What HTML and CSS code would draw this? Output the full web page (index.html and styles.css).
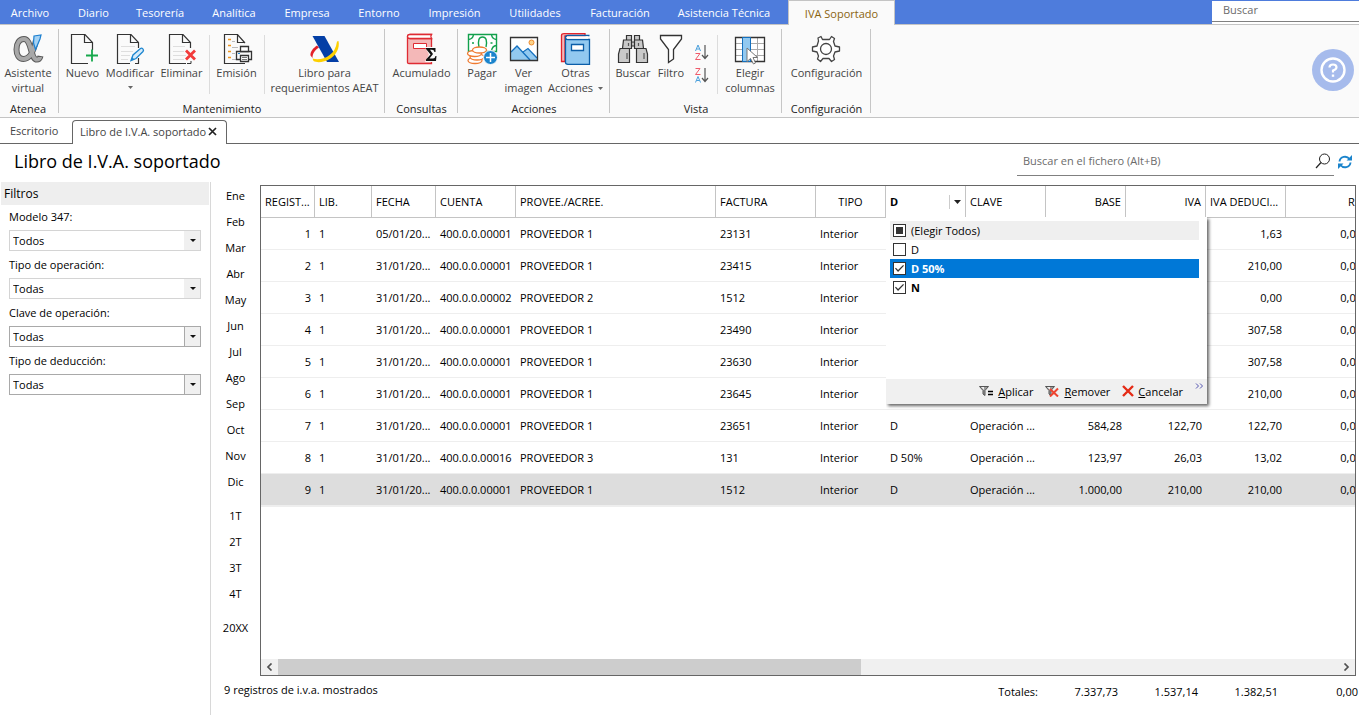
FILE: index.html
```html
<!DOCTYPE html>
<html lang="es">
<head>
<meta charset="utf-8">
<title>Libro de I.V.A. soportado</title>
<link rel="stylesheet" href="styles.css">
</head>
<body>
<div class="app">
  <header class="menubar">
    <nav class="menu">
      <button class="menu-tab">Archivo</button>
      <button class="menu-tab">Diario</button>
      <button class="menu-tab">Tesorería</button>
      <button class="menu-tab">Analítica</button>
      <button class="menu-tab">Empresa</button>
      <button class="menu-tab">Entorno</button>
      <button class="menu-tab">Impresión</button>
      <button class="menu-tab">Utilidades</button>
      <button class="menu-tab">Facturación</button>
      <button class="menu-tab">Asistencia Técnica</button>
      <button class="menu-tab active">IVA Soportado</button>
    </nav>
    <div class="top-search"><input type="text" placeholder="Buscar" aria-label="Buscar"></div>
  </header>

  <section class="ribbon">
    <div class="group g-atenea">
      <div class="tools">
        <button class="tool">
          <svg width="32" height="32" viewBox="0 0 32 32" fill="none"><path d="M24 7C22 17 18 26 11.500 26C7 26 4.500 22 4.500 16.500C4.500 10 7.500 6 12 6C19.500 6 18.500 25 24 26.500C26.500 27 28 25.500 28.500 23" stroke="#5a5a5a" stroke-width="6"/><path d="M24 7C22 17 18 26 11.500 26C7 26 4.500 22 4.500 16.500C4.500 10 7.500 6 12 6C19.500 6 18.500 25 24 26.500C26.500 27 28 25.500 28 24" stroke="#a8a8a8" stroke-width="4"/><path d="M22 3L29 2L28 6L23.500 16.500L21.500 10Z" fill="#a4d2f4" stroke="#1c7fd0" stroke-width="1.200"/></svg>
          <span>Asistente<br>virtual</span>
        </button>
      </div>
      <h2>Atenea</h2>
    </div>

    <div class="group g-mant">
      <div class="tools">
        <button class="tool w-nuevo">
          <svg width="32" height="32" viewBox="0 0 32 32" fill="none"><path d="M25.500 17V9.500L18 1.500H4.500V30.500H21" stroke="#333" stroke-width="1.200"/><path d="M17.500 1.500V9.500H25.500" stroke="#333" stroke-width="1.200"/><path d="M19 22.500H31M25 16.500V28.500" stroke="#16a84c" stroke-width="1.800"/></svg>
          <span>Nuevo</span>
        </button>
        <button class="tool w-modif">
          <svg width="32" height="32" viewBox="0 0 32 32" fill="none"><path d="M24.500 15V9.500L17 1.500H3.500V30.500H16M24.500 25V30.500H21" stroke="#333" stroke-width="1.200"/><path d="M16.500 1.500V9.500H24.500" stroke="#333" stroke-width="1.200"/><path d="M7 13.500H21M7 18.500H19M7 22.500H16M7 26.500H14" stroke="#dedede"/><path d="M17 27.500L19 22L26.500 15.500C28 14.500 30.500 16.500 29 18.500L22 25.500Z" fill="#d7ebfa" stroke="#1d86cf" stroke-width="1.300"/><path d="M17 27.500L18 24L20.500 26.500Z" fill="#1d86cf"/></svg>
          <span>Modificar</span>
          <svg class="caret" width="5" height="3" viewBox="0 0 5 3"><path d="M0 0H5L2.500 3Z" fill="#666"/></svg>
        </button>
        <button class="tool w-elim">
          <svg width="32" height="32" viewBox="0 0 32 32" fill="none"><path d="M24.500 15V9.500L17 1.500H3.500V30.500H20" stroke="#333" stroke-width="1.200"/><path d="M16.500 1.500V9.500H24.500" stroke="#333" stroke-width="1.200"/><path d="M25 28V30.500H21" stroke="#333"/><path d="M7 13.500H19M7 18.500H18M7 22.500H20M7 26.500H18" stroke="#dedede"/><path d="M20 17.500L29 26.500M29 17.500L20 26.500" stroke="#f23b3b" stroke-width="2.800"/></svg>
          <span>Eliminar</span>
        </button>
        <i class="sep"></i>
        <button class="tool w-elim">
          <svg width="32" height="32" viewBox="0 0 32 32" fill="none"><path d="M24 10L16.500 1.500H3.500V30.500H24" stroke="#333" stroke-width="1.200"/><path d="M16.500 1.500V9.500H24" stroke="#333" stroke-width="1.200"/><path d="M7 6.500H10M7 12.500H10M7 18.500H10M7 24.500H10" stroke="#f0961e" stroke-width="1.400"/><path d="M11 8.500H14M11 14.500H17M11 20.500H14M11 26.500H16" stroke="#bbb"/><path d="M15.500 18.500H30.500V26.500H15.500Z" fill="#fafafa" stroke="#333" stroke-width="1.300"/><path d="M19.500 13.500H27.500V18.500H19.500Z" fill="#fff" stroke="#333" stroke-width="1.300"/><path d="M19.500 22.500H27.500V28.500H19.500Z" fill="#fff" stroke="#333" stroke-width="1.300"/><path d="M21 24.500H26M21 26.500H26" stroke="#777"/><path d="M17 20.500H19" stroke="#1d86cf"/></svg>
          <span>Emisión</span>
        </button>
        <i class="sep"></i>
        <button class="tool w-libro">
          <svg width="32" height="32" viewBox="0 0 32 32" fill="none"><path d="M8 12.500C4 15 1 19 1.500 22.500L3.500 25C3.500 20.500 6 17 10 14.500Z" fill="#e32028"/><path d="M3.500 3H15.500L30 29H18Z" fill="#043fa6"/><path d="M3.500 25.500C12 28 26 24 28 8.500L29.500 8C31 15 27 22 21.500 25.500C15 29.500 8 30 4.500 28Z" fill="#fdd000"/></svg>
          <span>Libro para<br>requerimientos AEAT</span>
        </button>
      </div>
      <h2>Mantenimiento</h2>
    </div>

    <div class="group g-cons">
      <div class="tools">
        <button class="tool">
          <svg width="32" height="32" viewBox="0 0 32 32" fill="none"><path d="M2.500 4V29.500Q2.500 30.500 4 30.500H26.500V5.500H5Q2.500 5.500 2.500 3.500Q2.500 1.500 5 1.500H27" fill="#f4b8b8" stroke="#df2b33" stroke-width="1.300"/><path d="M5 1.500H26.500Q25 3.500 26.500 5.500H5Q2.500 5.500 2.500 3.500Q2.500 1.500 5 1.500Z" fill="#fff" stroke="#df2b33" stroke-width="1.300"/><path d="M8.500 10.500H21.500V15.500H8.500Z" fill="#fff" stroke="#df2b33"/><path d="M20 14H32V29H20L24 21.500Z" fill="#fafafa"/><path d="M21 15H30.500V19H29.500Q29 16.800 27 16.800H25L28 21L24.500 25.500H28Q30 25.500 30.500 23H31.500L31 28H21V26.500L25.500 21.500L21 16Z" fill="#111"/></svg>
          <span>Acumulado</span>
        </button>
      </div>
      <h2>Consultas</h2>
    </div>

    <div class="group g-acc">
      <div class="tools">
        <button class="tool w-pagar">
          <svg width="32" height="32" viewBox="0 0 32 32" fill="none"><path d="M2.500 1.500H30.500V18.500H2.500Z" fill="#fff" stroke="#12a04c" stroke-width="1.400"/><path d="M2.500 6.500Q7 6 7.500 1.500M25.500 1.500Q26 6 30.500 6.500M25.500 18Q26 13 30.500 12.500M6 10H8M24.500 10H26.500M13 14Q11 4 16.500 4Q22 4 20 14" stroke="#12a04c" stroke-width="1.400"/><g fill="#fff" stroke="#ef7b32" stroke-width="1.300"><ellipse cx="9" cy="27.500" rx="7" ry="3"/><ellipse cx="11" cy="24" rx="7" ry="3"/><ellipse cx="8.500" cy="20.500" rx="7" ry="3"/><ellipse cx="13.500" cy="17" rx="7" ry="3"/></g><circle cx="24.500" cy="24.500" r="7" fill="#1b84cc" stroke="#fafafa"/><path d="M20 24.500H29M24.500 20V29" stroke="#fff" stroke-width="1.500"/></svg>
          <span>Pagar</span>
        </button>
        <button class="tool w-ver">
          <svg width="32" height="32" viewBox="0 0 32 32" fill="none"><path d="M2.500 4.500H29.500V27.500H2.500Z" fill="#fff"/><path d="M3 19L9 13L22 27H3ZM14 20L20 16L29 25V27H21Z" fill="#92c9f0"/><path d="M3 19L9 13L22 27M15 19L20 15.500L29 25" stroke="#1470bf" stroke-width="1.300"/><circle cx="23.500" cy="9.500" r="2.500" fill="#fbd38a" stroke="#ef8a2c"/><path d="M2.500 4.500H29.500V27.500H2.500Z" stroke="#333" stroke-width="1.300"/></svg>
          <span>Ver<br>imagen</span>
        </button>
        <button class="tool w-otras">
          <svg width="32" height="32" viewBox="0 0 32 32" fill="none"><path d="M1.500 2V28.500H5V3H25V.700H4Q1.500 .700 1.500 2.500" fill="#f4b8b8" stroke="#e3232b" stroke-width="1.300"/><path d="M5.500 3V29.500Q5.500 31.300 8 31.300H29.500V6.500H8Q5.500 6.500 5.500 4.500Q5.500 2.500 8 2.500H29.500" fill="#92c9f0" stroke="#0b5ea8" stroke-width="1.300"/><path d="M7 3.300H28V5.700H7Z" fill="#fff"/><path d="M11.500 11.500H23.500V17.500H11.500Z" fill="#fff" stroke="#0b5ea8" stroke-width="1.300"/></svg>
          <span>Otras<br>Acciones <svg class="inline-caret" width="5" height="3" viewBox="0 0 5 3"><path d="M0 0H5L2.500 3Z" fill="#666"/></svg></span>
        </button>
      </div>
      <h2>Acciones</h2>
    </div>

    <div class="group g-vista">
      <div class="tools">
        <button class="tool w-nuevo">
          <svg width="32" height="32" viewBox="0 0 32 32" fill="#c9c9c9" stroke="#333" stroke-width="1.200"><path d="M9.500 2.500H14.500V7.500H9.500ZM17.500 2.500H22.500V7.500H17.500ZM14 9H18V13H14Z"/><path d="M6.500 7H14.500V15.500H5.500ZM17.500 7H25.500L26.500 15.500H17.500ZM3 15.500H12.500V29.500H1.500V21ZM19.500 15.500H29L30.500 21V29.500H19.500Z"/><path d="M10 20V26M11.500 10V13M21.500 10V13M27 20V26" stroke="#555"/></svg>
          <span>Buscar</span>
        </button>
        <button class="tool w-filtro">
          <svg width="32" height="32" viewBox="0 0 32 32" fill="#fff" stroke="#333" stroke-width="1.300"><path d="M5.500 2.500H26.500V6L18.500 16.500V26L13.500 29.500V16.500L5.500 6Z"/></svg>
          <span>Filtro</span>
        </button>
        <div class="sorts">
          <button class="sort" aria-label="Orden ascendente"><svg width="16" height="17" viewBox="0 0 16 17" fill="none"><path d="M1.500 7L4 1L6.500 7M2.500 5H5.500" stroke="#4aa0dc"/><path d="M1.500 9.500H6L1.500 15.500H6.500" stroke="#ef5a6a"/><path d="M11 1V14M8 11L11 14.500L14 11" stroke="#555" stroke-width="1.200"/></svg></button>
          <button class="sort" aria-label="Orden descendente"><svg width="16" height="17" viewBox="0 0 16 17" fill="none"><path d="M1.500 1.500H6L1.500 7.500H6.500" stroke="#ef5a6a"/><path d="M1.500 15.500L4 9.500L6.500 15.500M2.500 13.500H5.500" stroke="#4aa0dc"/><path d="M11 1V14M8 11L11 14.500L14 11" stroke="#555" stroke-width="1.200"/></svg></button>
        </div>
        <i class="sep"></i>
        <button class="tool w-elegir">
          <svg width="32" height="32" viewBox="0 0 32 32" fill="none"><path d="M1.500 4.500H30.500V28.500H1.500Z" fill="#fff"/><path d="M1.500 10.500H30.500M1.500 16.500H30.500M1.500 22.500H30.500M23.500 4.500V28.500" stroke="#aaa"/><path d="M1.500 4.500H30.500V28.500H1.500Z" stroke="#333" stroke-width="1.300"/><path d="M8.500 4.500H16.500V28.500H8.500Z" fill="#92c9f0" stroke="#1470bf"/><path d="M13 15V28.500L16.500 25.500L19.500 31L21.500 30L19 24.500H23.500Z" fill="#fff" stroke="#777"/></svg>
          <span>Elegir<br>columnas</span>
        </button>
      </div>
      <h2>Vista</h2>
    </div>

    <div class="group g-conf">
      <div class="tools">
        <button class="tool">
          <svg width="32" height="32" viewBox="0 0 32 32" fill="#fff" stroke="#444" stroke-width="1.300" stroke-linejoin="round"><path d="M12.500 6.500L11 3.500L8 5L8.500 8L7 13L2.500 14V18L7 19L8.500 23L7.500 26L10.500 28.500L13 25.500H19L21.500 28.500L24.500 26.500L23.500 23L25 19L29.500 18V14L25 13L23.500 8.500L24.500 5.500L21.500 3.500L19.500 6.500Z"/><circle cx="16" cy="16" r="5.500"/></svg>
          <span>Configuración</span>
        </button>
      </div>
      <h2>Configuración</h2>
    </div>

    <button class="help" aria-label="Ayuda"><svg width="26" height="26" viewBox="0 0 26 26" fill="none" stroke="#fff"><circle cx="13" cy="13" r="11.500" stroke-width="2.400"/><path d="M9.500 10.500Q9.500 7.500 13 7.500Q16.500 7.500 16.500 10.300Q16.500 12.300 13 13.500V15.500" stroke-width="2.200"/><path d="M13 17.500V19.800" stroke-width="2.400"/></svg></button>
  </section>

  <nav class="doc-tabs">
    <button class="doc-tab">Escritorio</button>
    <button class="doc-tab current">Libro de I.V.A. soportado <svg width="9" height="9" viewBox="0 0 9 9"><path d="M1 1L8 8M8 1L1 8" stroke="#222" stroke-width="1.700"/></svg></button>
    <i class="rest"></i>
  </nav>

  <div class="title-bar">
    <h1>Libro de I.V.A. soportado</h1>
    <label class="file-search">
      <input type="text" placeholder="Buscar en el fichero (Alt+B)" aria-label="Buscar en el fichero">
      <svg width="16" height="16" viewBox="0 0 16 16" fill="none" stroke="#222"><circle cx="9.500" cy="6" r="5"/><path d="M6 9.500L1 15" stroke-width="1.200"/></svg>
    </label>
    <button class="refresh" aria-label="Actualizar"><svg width="14" height="14" viewBox="0 0 14 14" fill="none" stroke="#1b84cc" stroke-width="1.900"><path d="M1.500 6.500C2 1.500 8.500 0 11.500 4M12.500 7.500C12 12.500 5.500 14 2.500 10"/><path d="M14 0V5.500H8.500ZM0 14V8.500H5.500Z" fill="#1b84cc" stroke="none"/></svg></button>
  </div>

  <main class="work">
    <aside class="filters">
      <h3>Filtros</h3>
      <label for="f1">Modelo 347:</label>
      <div class="combo light"><select id="f1"><option>Todos</option></select><i></i></div>
      <label for="f2">Tipo de operación:</label>
      <div class="combo light"><select id="f2"><option>Todas</option></select><i></i></div>
      <label for="f3">Clave de operación:</label>
      <div class="combo"><select id="f3"><option>Todas</option></select><i></i></div>
      <label for="f4">Tipo de deducción:</label>
      <div class="combo"><select id="f4"><option>Todas</option></select><i></i></div>
    </aside>

    <nav class="periods">
      <button>Ene</button><button>Feb</button><button>Mar</button><button>Abr</button><button>May</button><button>Jun</button><button>Jul</button><button>Ago</button><button>Sep</button><button>Oct</button><button>Nov</button><button>Dic</button>
      <button class="first">1T</button><button>2T</button><button>3T</button><button>4T</button>
      <button class="first">20XX</button>
    </nav>

    <section class="book">
      <div class="grid">
        <div class="viewport">
          <table>
            <colgroup><col class="c54"><col class="c57"><col class="c64"><col class="c80"><col class="c200"><col class="c100"><col class="c70"><col class="c80"><col class="c80"><col class="c80"><col class="c80"><col class="c80"><col class="c80"></colgroup>
            <thead>
              <tr><th>REGIST...</th><th>LIB.</th><th>FECHA</th><th>CUENTA</th><th>PROVEE./ACREE.</th><th>FACTURA</th><th class="mid">TIPO</th><th class="filtered"><div><b>D</b><button aria-label="Filtrar D"><svg width="7" height="4" viewBox="0 0 7 4"><path d="M0 0H7L3.500 4Z" fill="#222"/></svg></button></div></th><th>CLAVE</th><th class="num">BASE</th><th class="num">IVA</th><th>IVA DEDUCI...</th><th class="num">RE</th></tr>
            </thead>
            <tbody>
              <tr><td class="num">1</td><td>1</td><td>05/01/20...</td><td>400.0.0.00001</td><td>PROVEEDOR 1</td><td>23131</td><td>Interior</td><td></td><td></td><td></td><td></td><td class="num">1,63</td><td class="num">0,00</td></tr>
              <tr><td class="num">2</td><td>1</td><td>31/01/20...</td><td>400.0.0.00001</td><td>PROVEEDOR 1</td><td>23415</td><td>Interior</td><td></td><td></td><td></td><td></td><td class="num">210,00</td><td class="num">0,00</td></tr>
              <tr><td class="num">3</td><td>1</td><td>31/01/20...</td><td>400.0.0.00002</td><td>PROVEEDOR 2</td><td>1512</td><td>Interior</td><td></td><td></td><td></td><td></td><td class="num">0,00</td><td class="num">0,00</td></tr>
              <tr><td class="num">4</td><td>1</td><td>31/01/20...</td><td>400.0.0.00001</td><td>PROVEEDOR 1</td><td>23490</td><td>Interior</td><td></td><td></td><td></td><td></td><td class="num">307,58</td><td class="num">0,00</td></tr>
              <tr><td class="num">5</td><td>1</td><td>31/01/20...</td><td>400.0.0.00001</td><td>PROVEEDOR 1</td><td>23630</td><td>Interior</td><td></td><td></td><td></td><td></td><td class="num">307,58</td><td class="num">0,00</td></tr>
              <tr><td class="num">6</td><td>1</td><td>31/01/20...</td><td>400.0.0.00001</td><td>PROVEEDOR 1</td><td>23645</td><td>Interior</td><td></td><td></td><td></td><td></td><td class="num">210,00</td><td class="num">0,00</td></tr>
              <tr><td class="num">7</td><td>1</td><td>31/01/20...</td><td>400.0.0.00001</td><td>PROVEEDOR 1</td><td>23651</td><td>Interior</td><td>D</td><td>Operación ...</td><td class="num">584,28</td><td class="num">122,70</td><td class="num">122,70</td><td class="num">0,00</td></tr>
              <tr><td class="num">8</td><td>1</td><td>31/01/20...</td><td>400.0.0.00016</td><td>PROVEEDOR 3</td><td>131</td><td>Interior</td><td>D 50%</td><td>Operación ...</td><td class="num">123,97</td><td class="num">26,03</td><td class="num">13,02</td><td class="num">0,00</td></tr>
              <tr class="selected"><td class="num">9</td><td>1</td><td>31/01/20...</td><td>400.0.0.00001</td><td>PROVEEDOR 1</td><td>1512</td><td>Interior</td><td>D</td><td>Operación ...</td><td class="num">1.000,00</td><td class="num">210,00</td><td class="num">210,00</td><td class="num">0,00</td></tr>
            </tbody>
          </table>
        </div>
        <div class="hscroll">
          <button aria-label="Desplazar a la izquierda"><svg width="7" height="8" viewBox="0 0 7 8" fill="none" stroke="#505050" stroke-width="1.700"><path d="M5.500 .500L2 4L5.500 7.500"/></svg></button>
          <div class="track"><i class="thumb"></i></div>
          <button aria-label="Desplazar a la derecha"><svg width="7" height="8" viewBox="0 0 7 8" fill="none" stroke="#505050" stroke-width="1.700"><path d="M1.500 .500L5 4L1.500 7.500"/></svg></button>
        </div>

        <div class="popup">
          <div class="options">
            <label class="option all"><input type="checkbox" class="partial">(Elegir Todos)</label>
            <label class="option"><input type="checkbox">D</label>
            <label class="option hot"><input type="checkbox" checked>D 50%</label>
            <label class="option on"><input type="checkbox" checked>N</label>
          </div>
          <div class="actions">
            <button><svg width="15" height="12" viewBox="0 0 15 12"><path d="M.500 1.500H9.500L6 5.500V10.500L4 9V5.500Z" fill="#999" stroke="#555"/><path d="M2 2H5L5 5Z" fill="#eee"/><path d="M9 6.500H14M9 9.500H14" stroke="#000" stroke-width="1.600"/></svg><span><u>A</u>plicar</span></button>
            <button><svg width="15" height="12" viewBox="0 0 15 12"><path d="M.500 1.500H9.500L6 5.500V10.500L4 9V5.500Z" fill="#999" stroke="#555"/><path d="M2 2H5L5 5Z" fill="#eee"/><path d="M5 4L13 11.500M13 3.500L5 11.500" stroke="#ee4430" stroke-width="2"/></svg><span><u>R</u>emover</span></button>
            <button><svg width="12" height="12" viewBox="0 0 12 12"><path d="M1 1L11 11M11 1L1 11" stroke="#e52b16" stroke-width="2.400"/></svg><span><u>C</u>ancelar</span></button>
            <svg class="more" width="9" height="6" viewBox="0 0 9 6" fill="none" stroke="#5555b0"><path d="M1 .500L3.500 3L1 5.500M5 .500L7.500 3L5 5.500"/></svg>
          </div>
        </div>
      </div>

      <footer class="status">
        <span class="count">9 registros de i.v.a. mostrados</span>
        <span class="total-label">Totales:</span>
        <span class="total">7.337,73</span><span class="total">1.537,14</span><span class="total">1.382,51</span><span class="total">0,00</span>
      </footer>
    </section>
  </main>
</div>
</body>
</html>
```

FILE: styles.css
```css
* { box-sizing: border-box; }
body { margin: 0; background: #fff; color: #000; font: 11px/15px "Open Sans", "Noto Sans", sans-serif; }
button, input, select { font: inherit; color: inherit; margin: 0; padding: 0; border: 0; background: none; border-radius: 0; }
h1, h2, h3 { margin: 0; font-weight: 400; }
svg { display: block; flex: none; }
.app { min-height: 100vh; display: flex; flex-direction: column; overflow: hidden; }

/* Menu bar */
.menubar { display: flex; justify-content: space-between; height: 25px; background: #4e7cdc; border-bottom: 1px solid #c4c4c4; }
.menu { display: grid; grid-template-columns: 60px 67px 66px 82px 64px 80px 71px 90px 80px 128px 107px; height: 25px; }
.menu-tab { color: #fff; white-space: nowrap; }
.menu-tab.active { color: #8a6410; background: #fafafa; border: 1px solid #c4c4c4; border-bottom: 0; }
.top-search { width: 147px; margin-top: 1px; background: #fff; }
.top-search input { display: block; width: 100%; height: 21px; padding: 0 11px 3px; border-bottom: 1px solid #808080; }
input::placeholder { color: #6b6b6b; opacity: 1; }
input { outline: 0; }

/* Ribbon */
.ribbon { display: flex; height: 93px; background: #fafafa; border-bottom: 1px solid #c4c4c4; position: relative; }
.group { display: flex; flex-direction: column; justify-content: space-between; position: relative; padding-top: 8px; }
.group::after { content: ""; position: absolute; right: 0; top: 4px; bottom: 4px; width: 1px; background: #c6c6c6; }
.group h2 { font-size: 11px; line-height: 16px; text-align: center; color: #222; }
.tools { display: flex; justify-content: center; }
.tool { display: flex; flex-direction: column; align-items: center; color: #444; white-space: nowrap; }
.tool span { text-align: center; }
.caret { margin-top: 6px; }
.inline-caret { display: inline-block; vertical-align: 2px; margin-left: 2px; }
.sep { width: 1px; height: 59px; margin: 2px 3px 0; background: #dcdcdc; }
.g-atenea { width: 59px; }
.g-atenea .tools, .g-atenea h2 { padding-right: 3px; }
.g-mant { width: 326px; }
.g-cons { width: 73px; }
.g-acc { width: 152px; }
.g-vista { width: 172px; }
.g-conf { width: 89px; }
.w-nuevo { width: 40px; }
.w-modif { width: 55px; }
.w-elim { width: 48px; }
.w-libro { width: 114px; }
.w-pagar { width: 40px; }
.w-ver { width: 43px; }
.w-otras { width: 61px; }
.w-filtro { width: 36px; }
.w-elegir { width: 58px; }
.sorts { width: 25px; display: flex; flex-direction: column; gap: 6px; padding: 11px 0 0 5px; }
.help { display: grid; place-items: center; width: 42px; height: 42px; margin: 24px 5px 0 auto; border-radius: 50%; background: #a6bbec; }

/* Document tabs */
.doc-tabs { display: flex; align-items: flex-end; height: 26px; }
.doc-tab { height: 24px; padding: 0 10px 2px; color: #444; border-bottom: 1px solid #666; white-space: nowrap; width: 72px; text-align: left; }
.doc-tab.current { display: flex; align-items: center; justify-content: space-between; width: 155px; padding: 0 9px 2px 7px; border: 1px solid #666; border-bottom: 0; border-radius: 4px 4px 0 0; }
.rest { flex: 1; height: 1px; background: #666; }

/* Title and file search */
.title-bar { display: flex; height: 38px; padding: 3px 7px 0 14px; }
h1 { flex: 1; font-size: 18px; line-height: 28px; }
.file-search { display: flex; align-items: center; width: 317px; height: 29px; padding: 0 3px 0 6px; border-bottom: 1px solid #808080; }
.file-search input { flex: 1; height: 20px; padding-bottom: 2px; }
.refresh { display: flex; align-items: center; height: 30px; margin-left: 4px; }

/* Work area */
.work { flex: 1; display: flex; }
.filters { width: 211px; flex: none; padding: 0 9px; border-right: 1px solid #d8d8d8; }
.filters h3 { margin: 0 -8px 3px; padding: 0 3px; font-size: 12px; line-height: 23px; background: #eee; }
.filters label { display: block; line-height: 17px; margin-bottom: 5px; }
.combo { position: relative; height: 21px; width: 192px; margin-bottom: 5px; border: 1px solid #a9a9a9; }
.combo select { display: block; width: 100%; height: 19px; padding: 0 20px 0 3px; appearance: none; }
.combo i { position: absolute; right: 0; top: 0; width: 16px; height: 19px; display: grid; place-items: center; background: #f0f0f0; border-left: 1px solid #a9a9a9; pointer-events: none; }
.combo i::after { content: ""; border: 3px solid transparent; border-top-color: #111; border-bottom: 0; }
.combo.light { border-color: #d4d4d4; }
.combo.light i { border-left-color: #f0f0f0; }
.periods { display: flex; flex-direction: column; width: 49px; flex: none; }
.periods button { height: 26px; }
.periods .first { margin-top: 8px; }
.book { flex: 1; min-width: 0; display: flex; flex-direction: column; }

/* Grid */
.grid { position: relative; flex: 1; display: flex; flex-direction: column; margin: 3px 3px 0 0; border: 1px solid #666; }
.viewport { flex: 1; overflow: hidden; }
table { table-layout: fixed; width: 1105px; border-collapse: separate; border-spacing: 0; }
.c54 { width: 54px; } .c57 { width: 57px; } .c64 { width: 64px; } .c70 { width: 70px; }
.c80 { width: 80px; } .c100 { width: 100px; } .c200 { width: 200px; }
th, td { height: 32px; padding: 0 0 0 4px; font-weight: 400; text-align: left; white-space: nowrap; overflow: hidden; }
th { border-right: 1px solid #c4c4c4; border-bottom: 1px solid #c4c4c4; }
td { border-bottom: 1px solid #eee; }
.num { text-align: right; padding: 0 4px 0 0; }
th.mid { text-align: center; padding: 0; }
.selected td { background: #ddd; height: 33px; border-bottom-width: 2px; }
.filtered div { display: flex; justify-content: space-between; align-items: center; }
.filtered button { display: grid; place-items: center; width: 16px; height: 14px; border-left: 1px solid #ccc; }
.hscroll { display: flex; height: 16px; background: #f0f0f0; }
.hscroll button { width: 17px; display: grid; place-items: center; }
.track { flex: 1; display: flex; }
.thumb { width: 55%; background: #cdcdcd; }

/* Column filter popup */
.popup { position: absolute; left: 625px; top: 31px; width: 321px; background: #fff; box-shadow: 2px 2px 3px rgba(0, 0, 0, .6); clip-path: inset(0 -8px -8px 0); }
.options { height: 162px; padding: 4px 8px 0 4px; }
.option { display: flex; align-items: center; gap: 5px; height: 19px; padding-left: 3px; }
.option.all { background: #efefef; }
.option.hot { background: #0078d7; color: #fff; font-weight: 700; }
.option.on { font-weight: 700; }
.option input { appearance: none; display: grid; place-items: center; width: 13px; height: 13px; border: 1px solid #333; background: #fff; }
.option .partial::before { content: ""; width: 7px; height: 7px; background: #333; }
.option input:checked::before { content: ""; width: 9px; height: 7px; background: #333; clip-path: polygon(0 50%, 10% 38%, 34% 70%, 90% 0, 100% 12%, 34% 100%); }
.actions { display: flex; align-items: center; justify-content: flex-end; height: 25px; padding: 0 3px 1px 0; background: #f0f0f0; }
.actions button { display: flex; align-items: center; gap: 4px; margin-right: 12px; }
.more { align-self: flex-start; margin-top: 4px; }

/* Status line */
.status { display: flex; height: 39px; padding: 6px 1px 0 0; }
.count { flex: 1; margin-left: -36px; }
.total-label { padding-top: 2px; }
.total { width: 80px; padding-top: 2px; text-align: right; }
```
